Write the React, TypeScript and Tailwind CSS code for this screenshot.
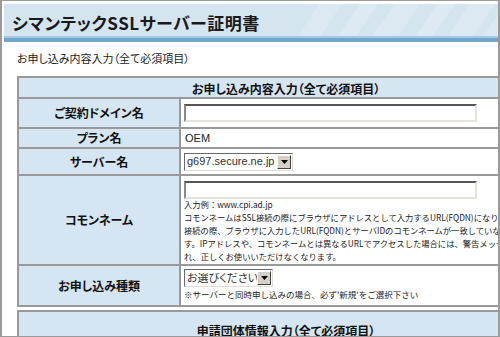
import React from "react";

const jp = "font-['Noto_Sans_CJK_JP',sans-serif] [font-feature-settings:'palt']";

function SelectBox({ text, width }: { text: string; width: string }) {
    return (
        <div className={`${width} h-[18px] flex items-center border border-t-[#6b6b6b] border-l-[#6b6b6b] border-r-[#e0ddd6] border-b-[#e0ddd6] bg-white`}>
            <div className="flex-1 pl-[2px] text-[11px] leading-none text-[#333] font-['Liberation_Sans','Noto_Sans_CJK_JP',sans-serif] whitespace-nowrap overflow-hidden">
                {text}
            </div>
            <div className="w-[14px] h-[14px] mr-[1px] flex items-center justify-center bg-[#d4d0c8] border border-t-white border-l-white border-r-[#404040] border-b-[#404040]">
                <svg width="7" height="4" viewBox="0 0 7 4">
                    <polygon points="0,0 7,0 3.5,4" fill="#000" />
                </svg>
            </div>
        </div>
    );
}

function TextInput() {
    return (
        <div className="w-[293px] h-[18px] bg-white border-2 border-t-[#555] border-l-[#8a8a8a] border-r-[#e6e3dc] border-b-[#e6e3dc]"></div>
    );
}

function Row({ label, height, children, className }: { label: string; height: string; children: React.ReactNode; className?: string }) {
    return (
        <div className={`flex border-t-2 border-[#999] ${height}`}>
            <div className="w-[162px] shrink-0 bg-[#d5e5f1] border-r-2 border-[#999] flex items-center justify-center font-bold text-[12px] text-[#111]">
                {label}
            </div>
            <div className={`flex-1 pl-[3px] ${className ?? ""}`}>
                {children}
            </div>
        </div>
    );
}

export default function App() {
    return (
        <div className={`w-[500px] h-[337px] bg-white text-[#111] ${jp}`}>
            <div className="w-[500px] h-[337px] overflow-hidden border-l-2 border-t border-r-2 border-b border-[#9a9a9a] bg-white">
                <div className="ml-[2px] mt-[3px]">
                    <div className="relative h-[32px] bg-[#d5e5f0] flex items-center pl-[8px] pt-[4px]">
                        <svg className="absolute right-0 top-0" width="200" height="32" viewBox="0 0 200 32">
                            <polygon points="0,32 22,32 44,0 22,0" fill="#ffffff" opacity="0.18" />
                            <polygon points="40,32 58,32 80,0 62,0" fill="#ffffff" opacity="0.2" />
                            <polygon points="75,32 100,32 122,0 97,0" fill="#ffffff" opacity="0.18" />
                            <polygon points="118,32 135,32 157,0 140,0" fill="#ffffff" opacity="0.2" />
                            <polygon points="150,32 175,32 197,0 172,0" fill="#ffffff" opacity="0.18" />
                            <polygon points="185,32 200,32 200,10 207,0" fill="#ffffff" opacity="0.15" />
                        </svg>
                        <h1 className="relative font-bold text-[17px] leading-none text-[#1a1a1a] tracking-[0.5px]">
                            シマンテックSSLサーバー証明書
                        </h1>
                    </div>
                    <div className="h-[2px] bg-[#a4c9e3]"></div>
                    <div className="h-[4px] bg-[#6fa7cf]"></div>
                </div>

                <div className="pl-[15px]">
                    <p className="mt-[8px] h-[16px] text-[11px] leading-[16px] text-[#222]">
                        お申し込み内容入力（全て必須項目）
                    </p>

                    <div className="mt-[10px] w-[538px] border-2 border-[#999]">
                        <div className="h-[19px] bg-[#d5e5f1] flex items-center justify-center pt-[2px] font-bold text-[12px]">
                            お申し込み内容入力（全て必須項目）
                        </div>
                        <Row label="ご契約ドメイン名" height="h-[30px]" className="flex items-center">
                            <TextInput />
                        </Row>
                        <Row label="プラン名" height="h-[20px]" className="flex items-center">
                            <span className="pl-[1px] text-[11px] text-[#222] font-['Liberation_Sans',sans-serif]">OEM</span>
                        </Row>
                        <Row label="サーバー名" height="h-[27px]" className="flex items-center">
                            <SelectBox text="g697.secure.ne.jp" width="w-[109px]" />
                        </Row>
                        <Row label="コモンネーム" height="h-[90px]" className="pt-[5px]">
                            <TextInput />
                            <div className="-mt-[1px] text-[8.3px] leading-[13px] text-[#222] whitespace-nowrap [font-feature-settings:normal]">
                                <p>入力例：www.cpi.ad.jp</p>
                                <p>コモンネームはSSL接続の際にブラウザにアドレスとして入力するURL(FQDN)になります。SSL</p>
                                <p>接続の際、ブラウザに入力したURL(FQDN)とサーバIDのコモンネームが一致していないと、警告が表示されま</p>
                                <p>す。IPアドレスや、コモンネームとは異なるURLでアクセスした場合には、警告メッセージが表示さ</p>
                                <p>れ、正しくお使いいただけなくなります。</p>
                            </div>
                        </Row>
                        <Row label="お申し込み種類" height="h-[41px]" className="pt-[3px]">
                            <SelectBox text="お選びください" width="w-[89px]" />
                            <p className="mt-[1px] text-[8.5px] leading-[13px] text-[#222] whitespace-nowrap [font-feature-settings:normal]">
                                ※サーバーと同時申し込みの場合、必ず'新規'をご選択下さい
                            </p>
                        </Row>
                    </div>

                    <div className="mt-[3px] w-[538px] border-2 border-[#999]">
                        <div className="h-[36px] bg-[#d5e5f1] flex items-center justify-center pt-[2px] font-bold text-[12px]">
                            申請団体情報入力（全て必須項目）
                        </div>
                    </div>
                </div>
            </div>
        </div>
    );
}
